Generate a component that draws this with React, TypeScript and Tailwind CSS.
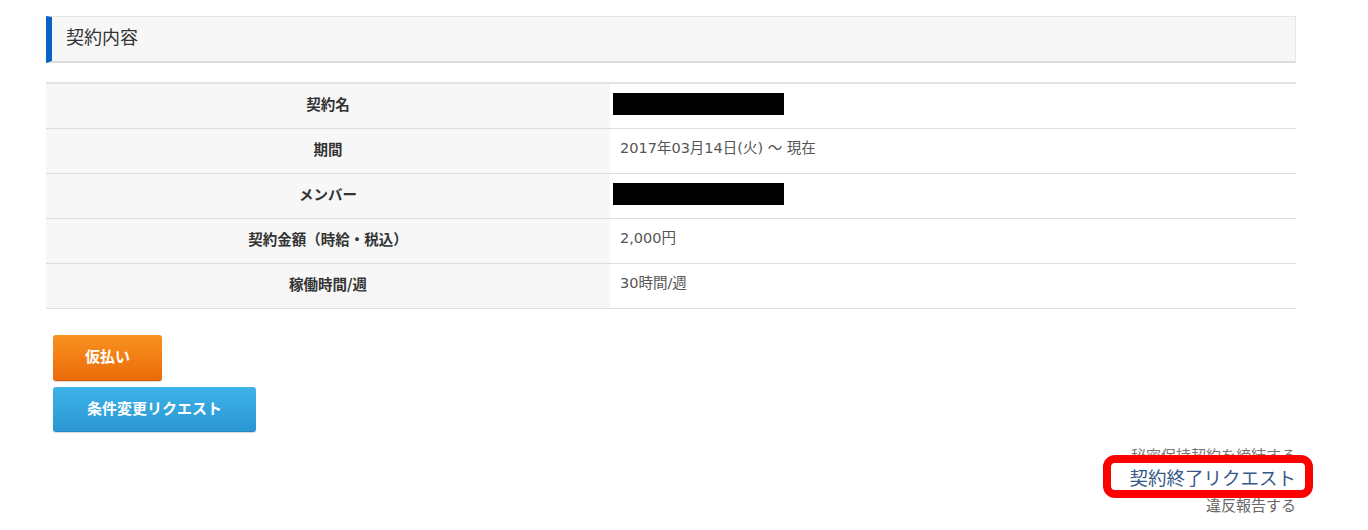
const font = { fontFamily: '"Noto Sans CJK JP", "Noto Sans", sans-serif' };
const valueFont = { fontFamily: '"DejaVu Sans", "Noto Sans CJK JP", sans-serif' };

const rows: { label: string; value?: string }[] = [
  { label: "契約名" },
  { label: "期間", value: "2017年03月14日(火) ～ 現在" },
  { label: "メンバー" },
  { label: "契約金額（時給・税込）", value: "2,000円" },
  { label: "稼働時間/週", value: "30時間/週" },
];

export default function App() {
  return (
    <div className="w-[1368px] h-[530px] bg-white overflow-hidden" style={font}>
      <div className="ml-[46px] w-[1250px] pt-[16px]">
        {/* 見出し */}
        <div className="flex h-[47px] items-center pb-[5px] bg-[#f7f7f7] border border-[#e6e6e6] border-b-2 border-b-[#dcdcdc] border-l-[6px] border-l-[#0862c2] pl-[14px]">
          <h2 className="text-[18px] text-[#333]">契約内容</h2>
        </div>

        {/* 契約テーブル */}
        <div className="mt-[19px] border-t-2 border-[#e3e3e3]">
          {rows.map((r) => (
            <div key={r.label} className="flex h-[45px] border-b border-[#dedede]">
              <div className="w-[564px] bg-[#f7f7f7] flex items-center justify-center pb-[4px] text-[14.5px] font-bold text-[#333]">
                {r.label}
              </div>
              <div className="flex-1 flex items-center pl-[10px] pb-[4px] text-[14.5px] text-[#555]" style={valueFont}>
                {r.value ?? <div className="-ml-[7px] w-[171px] h-[22px] bg-black" />}
              </div>
            </div>
          ))}
        </div>

        {/* ボタン */}
        <div className="mt-[26px] ml-[7px] flex flex-col gap-[6px]">
          <button className="w-[109px] h-[46px] pb-[2px] rounded-[3px] bg-gradient-to-b from-[#f8921f] to-[#ec6a08] border-b border-[#d35f08] text-white text-[15px] font-bold shadow-[0_1px_1px_rgba(0,0,0,0.15)]">
            仮払い
          </button>
          <button className="w-[203px] h-[45px] pb-[2px] rounded-[3px] bg-gradient-to-b from-[#3db3e8] to-[#2b97d3] border-b border-[#2386c0] text-white text-[15px] font-bold shadow-[0_1px_1px_rgba(0,0,0,0.15)]">
            条件変更リクエスト
          </button>
        </div>

        {/* リンク */}
        <div className="mt-[12px] flex flex-col items-end">
          <a className="h-[22px] leading-[22px] text-[15px] text-[#777]">秘密保持契約を締結する</a>
          <div className="relative h-[22px] flex items-center">
            <span className="absolute -left-[26px] -right-[17px] -top-[11px] -bottom-[10px] rounded-[12px] border-[8px] border-[#ff0000] bg-white" />
            <a className="relative text-[18.5px] leading-[22px] text-[#37598a]">契約終了リクエスト</a>
          </div>
          <a className="mt-[6px] h-[22px] leading-[22px] text-[15px] text-[#666]">違反報告する</a>
        </div>
      </div>
    </div>
  );
}
